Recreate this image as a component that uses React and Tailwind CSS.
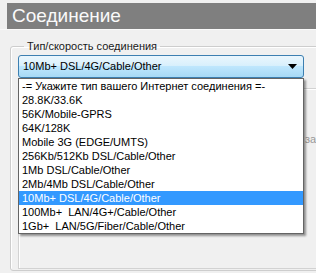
import React from 'react';

const options = [
  '-= Укажите тип вашего Интернет соединения =-',
  '28.8K/33.6K',
  '56K/Mobile-GPRS',
  '64K/128K',
  'Mobile 3G (EDGE/UMTS)',
  '256Kb/512Kb DSL/Cable/Other',
  '1Mb DSL/Cable/Other',
  '2Mb/4Mb DSL/Cable/Other',
  '10Mb+ DSL/4G/Cable/Other',
  '100Mb+  LAN/4G+/Cable/Other',
  '1Gb+  LAN/5G/Fiber/Cable/Other',
];

const selected = '10Mb+ DSL/4G/Cable/Other';

const App = () => {
  return (
    <div className="w-[316px] h-[273px] bg-[#f0f0f0] overflow-hidden font-['Liberation_Sans',Arial,sans-serif]">
      {/* Header */}
      <div className="pt-[3px] pl-[7px]">
        <div className="h-[26px] bg-[#7f7f7f] text-[#fafafa] text-[19px] leading-[26px] pl-[5px]">
          Соединение
        </div>
      </div>
      <div className="h-px bg-[#fafafa]" />

      {/* Group box */}
      <fieldset className="ml-[10px] mt-[9px] -mr-[10px] border border-[#cdcdcd] rounded-[3px] shadow-[inset_1px_1px_0_#ffffff] pl-[7px] pb-[1px]">
        <legend className="ml-[6px] px-[3px] text-[11px] leading-[14px] text-[#1a1a1a]">
          Тип/скорость соединения
        </legend>

        <div className="relative mt-[2px] w-[286px]">
          {/* Combo box */}
          <div className="h-[23px] flex items-center justify-between border border-[#3c7fb1] rounded-[3px] bg-[linear-gradient(#eaf6fd_0%,#d9f0fc_45%,#bee6fd_50%,#a7d9f5_100%)] pl-[4px] pr-[6px] text-[11px] text-black">
            <span>{selected}</span>
            <svg width="9" height="5" viewBox="0 0 9 5">
              <path d="M0 0h9L4.5 5z" fill="#000" />
            </svg>
          </div>

          {/* Dropdown list */}
          <div className="absolute left-0 top-full z-10 w-[286px] bg-white border border-[#646464] shadow-[2px_2px_2px_rgba(0,0,0,0.4)]">
            {options.map((opt) => (
              <div
                key={opt}
                className={`h-[14px] leading-[14px] pl-[3px] text-[11px] whitespace-pre ${
                  opt === selected ? 'bg-[#3399ff] text-white' : 'text-black'
                }`}
              >
                {opt}
              </div>
            ))}
          </div>
        </div>

        {/* Panel behind the list */}
        <div className="mt-[10px] h-[181px] border border-[#d2d2d2] shadow-[inset_1px_1px_0_#ffffff] pt-[42px] pl-[286px] text-[11px] text-[#9a9a9a]">
          за
        </div>
      </fieldset>
    </div>
  );
};

export default App;
